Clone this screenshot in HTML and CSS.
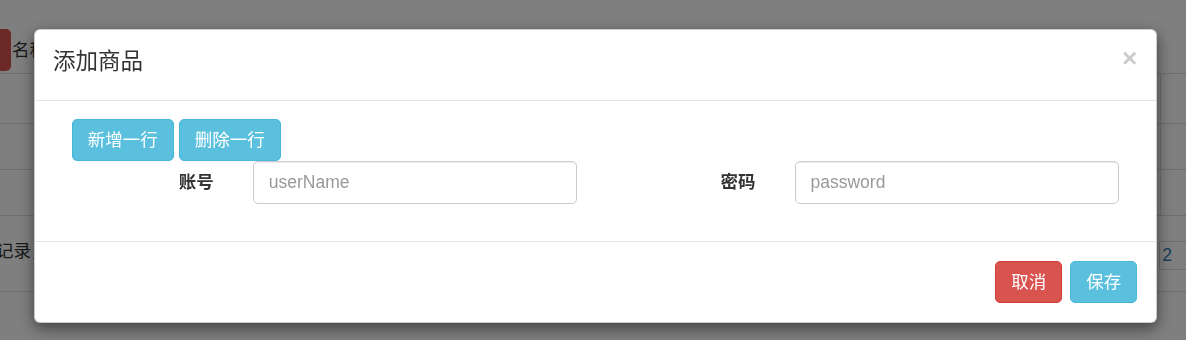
FILE: index.html
```html
<!DOCTYPE html>
<html lang="zh">
<head>
	<meta charset="UTF-8">
	<title>添加商品</title>
	<link rel="stylesheet" href="styles.css">
</head>
<body>
	<!-- pagina de fondo (queda bajo el backdrop) -->
	<main class="page">
		<div class="bg-toolbar">
			<span class="bg-btn"></span>
			<span class="bg-label">名称</span>
		</div>
		<section class="bg-table">
			<div class="bg-row head"><div></div><div class="last"></div></div>
			<div class="bg-row"><div></div><div class="last"></div></div>
			<div class="bg-row"><div></div><div class="last"></div></div>
		</section>
		<footer class="bg-foot">
			<span class="bg-count">记录，</span>
			<span class="bg-pager">2</span>
		</footer>
	</main>

	<div class="backdrop"></div>

	<div class="modal">
		<div class="modal-content">
			<header class="modal-header">
				<h4 class="modal-title">添加商品</h4>
				<button class="close" type="button">&times;</button>
			</header>
			<section class="modal-body">
				<div class="btn-row">
					<button class="btn btn-info" type="button">新增一行</button>
					<button class="btn btn-info" type="button">删除一行</button>
				</div>
				<div class="form-row">
					<div class="form-group">
						<label for="userName">账号</label>
						<input type="text" id="userName" class="form-control" placeholder="userName">
					</div>
					<div class="form-group">
						<label for="password">密码</label>
						<input type="text" id="password" class="form-control" placeholder="password">
					</div>
				</div>
			</section>
			<footer class="modal-footer">
				<button class="btn btn-danger" type="button">取消</button>
				<button class="btn btn-info" type="button">保存</button>
			</footer>
		</div>
	</div>
</body>
</html>
```

FILE: styles.css
```css
/* base */
html, body {
	height: 100%;
}
body {
	background-color: #fff;
	color: #333;
	font: 17.5px/1.42857 "Liberation Sans", "Noto Sans CJK SC", sans-serif;
	margin: 0px;
	overflow: hidden;
}

/* pagina de fondo */
.bg-toolbar {
	align-items: center;
	display: flex;
	height: 42.5px;
	margin-top: 29px;
}
.bg-btn {
	background-color: #d9534f;
	border-radius: 0px 5px 5px 0px;
	height: 42px;
	width: 11px;
}
.bg-label {
	margin-left: 1px;
}
.bg-table {
	margin-top: 1px;
}
.bg-row {
	border-top: 1.25px solid #ddd;
	display: grid;
	grid-template-columns: 1fr 26px;
	height: 45px;
}
.bg-row.head {
	height: 49px;
}
.bg-row .last {
	border-left: 1.25px solid #ddd;
}
.bg-foot {
	align-items: flex-start;
	border-top: 1.25px solid #ddd;
	border-bottom: 1.25px solid #ddd;
	display: flex;
	height: 75px;
	justify-content: space-between;
}
.bg-count {
	margin: 23px 0px 0px -4px;
}
.bg-pager {
	border: 1.25px solid #ddd;
	border-right: none;
	color: #337ab7;
	height: 27px;
	line-height: 27px;
	margin-top: 25px;
	padding: 0px 14px 0px 2px;
}

/* backdrop */
.backdrop {
	background-color: rgba(0,0,0,.5);
	inset: 0px;
	position: fixed;
}

/* modal */
.modal {
	inset: 0px;
	position: fixed;
}
.modal-content {
	background-color: #fff;
	border: 1.25px solid rgba(0,0,0,.2);
	border-radius: 6px;
	box-shadow: 0px 5px 15px rgba(0,0,0,.5);
	box-sizing: border-box;
	margin: 29px 0px 0px 34px;
	width: 1123px;
}
.modal-header {
	align-items: flex-start;
	border-bottom: 1.25px solid #e5e5e5;
	display: flex;
	justify-content: space-between;
	padding: 18.75px 18.75px 18.75px 18px;
}
.modal-title {
	font-size: 22.5px;
	font-weight: normal;
	line-height: 1.42857;
	margin: 0px;
	position: relative;
	top: -3px;
}
.close {
	background: transparent;
	border: none;
	color: #000;
	cursor: pointer;
	font: bold 26.25px/1 "Liberation Sans", sans-serif;
	margin-top: -4px;
	opacity: .2;
	padding: 0px;
}
.modal-body {
	padding: 18.75px;
}
.modal-footer {
	border-top: 1.25px solid #e5e5e5;
	display: flex;
	gap: 8px;
	justify-content: flex-end;
	padding: 18.75px;
}

/* botones */
.btn-row {
	display: flex;
	gap: 5px;
	padding-left: 18px;
}
.btn {
	border: 1.25px solid transparent;
	border-radius: 5px;
	color: #fff;
	cursor: pointer;
	font: 17.5px/25px "Liberation Sans", "Noto Sans CJK SC", sans-serif;
	padding: 7.5px 15px;
}
.btn-info {
	background-color: #5bc0de;
	border-color: #46b8da;
}
.btn-danger {
	background-color: #d9534f;
	border-color: #d43f3a;
}

/* formulario */
.form-row {
	display: grid;
	grid-template-columns: 1fr 1fr;
	margin-bottom: 18.75px;
}
.form-group {
	align-items: center;
	column-gap: 39px;
	display: grid;
	grid-template-columns: 1fr 324px;
	padding-right: 18.75px;
}
.form-group label {
	font-weight: bold;
	text-align: right;
}
.form-control {
	border: 1.25px solid #ccc;
	border-radius: 5px;
	box-shadow: inset 0px 1px 1px rgba(0,0,0,.075);
	box-sizing: border-box;
	color: #555;
	font: 17.5px/25px "Liberation Sans", "Noto Sans CJK SC", sans-serif;
	height: 42.5px;
	outline: none;
	padding: 7.5px 15px;
	width: 100%;
}
.form-control::placeholder {
	color: #999;
}
```
